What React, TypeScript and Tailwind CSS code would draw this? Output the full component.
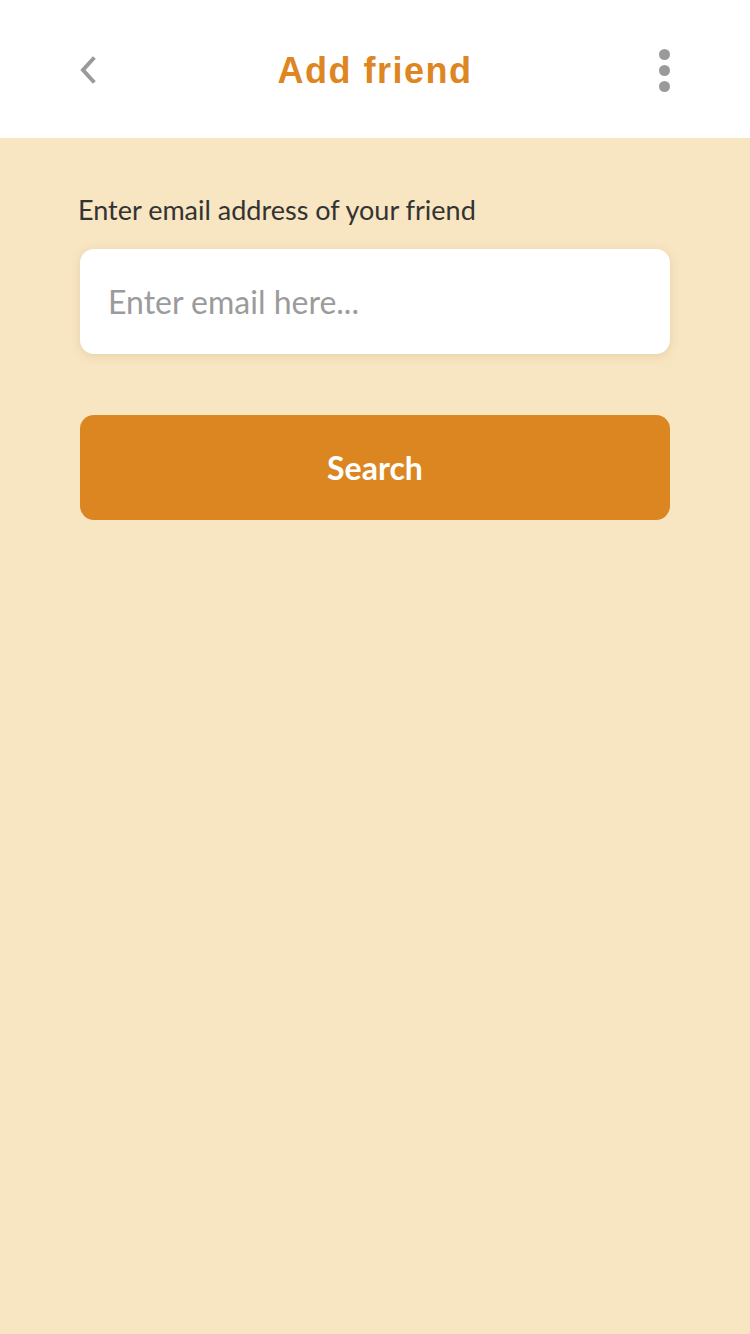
import { FunctionComponent } from "react";

const TopBar: FunctionComponent = () => {
  return (
    <div className="h-[138px] bg-white grid grid-cols-[1fr_auto_1fr] items-center px-[78px] pt-[2px]">
      <button className="w-[24px] h-[30px] flex items-center">
        <svg width="20" height="28" viewBox="0 0 20 28" fill="none">
          <path
            d="M15 3 L5 14 L15 25"
            stroke="#9a9a9a"
            strokeWidth="4"
            strokeLinecap="square"
          />
        </svg>
      </button>
      <div className="text-[36px] font-bold text-[#dd8622] font-['Liberation_Sans',Arial,sans-serif] tracking-[1.5px] pt-[2px]">
        Add friend
      </div>
      <div className="flex flex-col items-center gap-[5px] justify-self-end mr-[2px]">
        <span className="w-[11px] h-[11px] rounded-full bg-[#9a9a9a]" />
        <span className="w-[11px] h-[11px] rounded-full bg-[#9a9a9a]" />
        <span className="w-[11px] h-[11px] rounded-full bg-[#9a9a9a]" />
      </div>
    </div>
  );
};

const App: FunctionComponent = () => {
  return (
    <div className="w-[750px] h-[1334px] bg-[#f8e5c1] font-['Lato',sans-serif]">
      <TopBar />
      <div className="flex flex-col px-[80px] pt-[54px]">
        <label className="text-[27px] text-[#333] ml-[-2px] leading-[36px]">
          Enter email address of your friend
        </label>
        <input
          className="mt-[21px] h-[105px] w-full rounded-[14px] bg-white px-[28px] text-[32px] text-[#333] placeholder:text-[#9b9b9b] shadow-[0_2px_8px_rgba(180,150,100,0.25)] outline-none"
          placeholder="Enter email here..."
        />
        <button className="mt-[61px] h-[105px] w-full rounded-[14px] bg-[#dc8621] text-white text-[32px] font-bold">
          Search
        </button>
      </div>
    </div>
  );
};

export default App;
